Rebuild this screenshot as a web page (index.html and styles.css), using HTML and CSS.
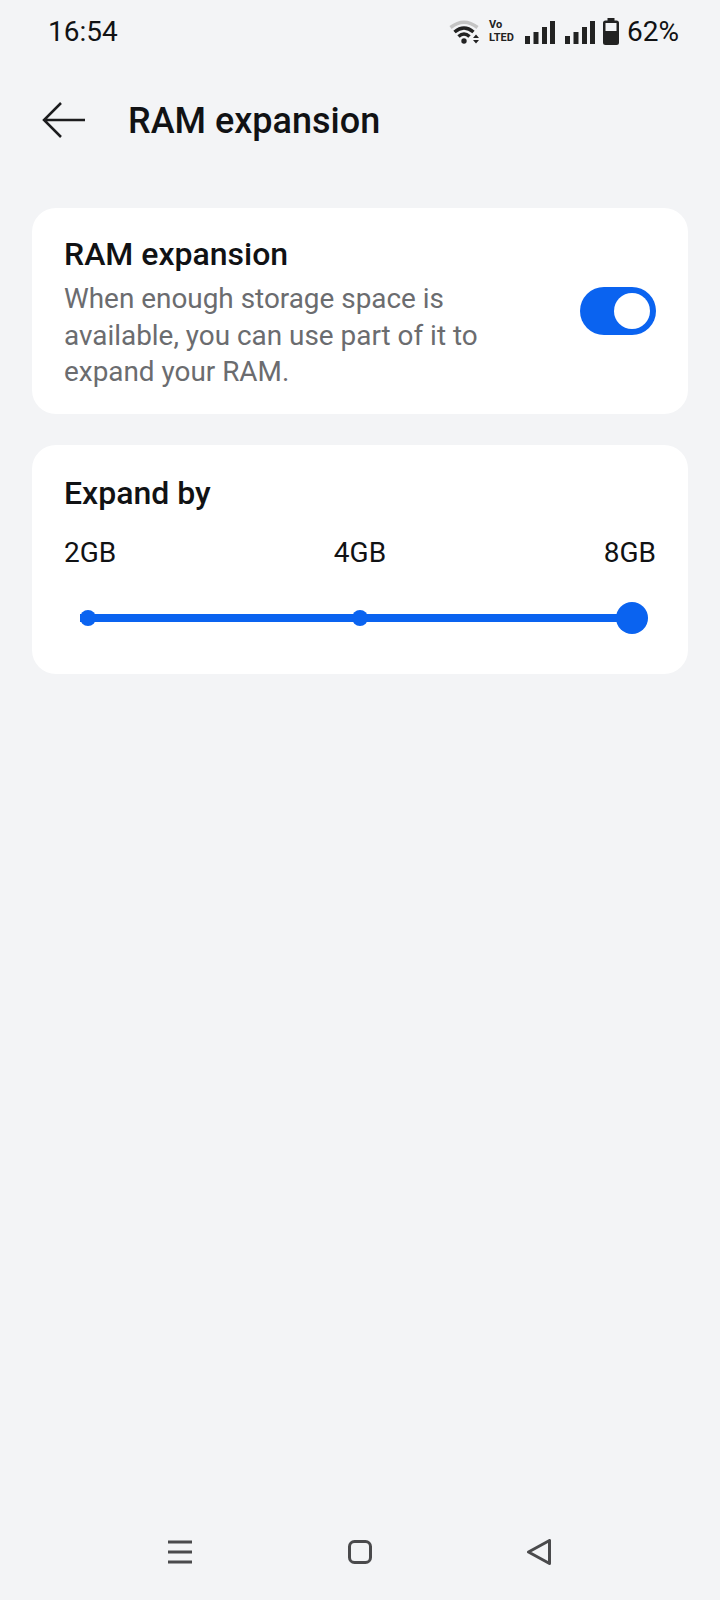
FILE: index.html
```html
<!DOCTYPE html>
<html lang="en">
<head>
    <meta charset="UTF-8">
    <meta name="viewport" content="width=device-width, initial-scale=1.0">
    <title>RAM expansion</title>
    <link rel="stylesheet" href="styles.css">
</head>
<body>
    <div class="app">
        <div class="status-bar">
            <span class="time">16:54</span>
            <div class="status-icons">
                <svg class="icon-wifi" width="32" height="24" viewBox="0 0 32 24">
                    <path d="M1.500 7.500 Q15 -3 28.500 7.500" fill="none" stroke="#c4c4c4" stroke-width="3.500"/>
                    <path d="M5.500 12 Q15 4 24.500 12" fill="none" stroke="#222" stroke-width="3.500"/>
                    <path d="M9.500 16.500 Q15 11.500 20.500 16.500" fill="none" stroke="#222" stroke-width="3.500"/>
                    <circle cx="15" cy="21" r="2.700" fill="#222"/>
                    <path d="M24 18 L27 14.500 L30 18 Z M24 20 H30 L27 23.500 Z" fill="#222"/>
                </svg>
                <div class="volte"><span>Vo</span><span>LTED</span></div>
                <svg class="icon-signal" width="30" height="24" viewBox="0 0 30 24">
                    <rect x="0" y="16" width="5" height="8"/>
                    <rect x="8.500" y="12" width="5" height="12"/>
                    <rect x="17" y="7" width="5" height="17"/>
                    <rect x="25" y="1" width="5" height="23"/>
                </svg>
                <svg class="icon-signal" width="30" height="24" viewBox="0 0 30 24">
                    <rect x="0" y="16" width="5" height="8"/>
                    <rect x="8.500" y="12" width="5" height="12"/>
                    <rect x="17" y="7" width="5" height="17"/>
                    <rect x="25" y="1" width="5" height="23"/>
                </svg>
                <svg class="icon-battery" width="16" height="27" viewBox="0 0 16 27">
                    <path d="M4.500 0 H11.500 V2.500 H13.500 Q16 2.500 16 5 V24.500 Q16 27 13.500 27 H2.500 Q0 27 0 24.500 V5 Q0 2.500 2.500 2.500 H4.500 Z" fill="#222"/>
                    <rect x="2.500" y="5" width="11" height="8" fill="#f3f4f6"/>
                </svg>
                <span class="battery-text">62%</span>
            </div>
        </div>

        <div class="header">
            <svg class="back-arrow" width="44" height="36" viewBox="0 0 44 36">
                <path d="M43 18 H2 M19 1 L2 18 L19 35" fill="none" stroke="#1c1c1e" stroke-width="2.500"/>
            </svg>
            <h1>RAM expansion</h1>
        </div>

        <div class="card card-switch">
            <div class="card-text">
                <h2>RAM expansion</h2>
                <p>When enough storage space is available, you can use part of it to expand your RAM.</p>
            </div>
            <div class="toggle"><div class="toggle-thumb"></div></div>
        </div>

        <div class="card card-slider">
            <h2>Expand by</h2>
            <div class="slider-labels">
                <span>2GB</span>
                <span>4GB</span>
                <span>8GB</span>
            </div>
            <div class="slider">
                <span class="stop"></span>
                <span class="stop"></span>
                <span class="thumb"></span>
            </div>
        </div>

        <div class="nav-bar">
            <svg width="24" height="24" viewBox="0 0 24 24">
                <path d="M0 2 H24 M0 12 H24 M0 22 H24" stroke="#4a4a4c" stroke-width="3"/>
            </svg>
            <svg width="24" height="24" viewBox="0 0 24 24">
                <rect x="1.500" y="1.500" width="21" height="21" rx="5" fill="none" stroke="#4a4a4c" stroke-width="3"/>
            </svg>
            <svg width="24" height="26" viewBox="0 0 24 26">
                <path d="M1.500 13 L22.500 1.500 V24.500 Z" fill="none" stroke="#4a4a4c" stroke-width="3" stroke-linejoin="round"/>
            </svg>
        </div>
    </div>
</body>
</html>
```

FILE: styles.css
```css
:root {
    --primary-color: #0a63f0;
    --text-color: #111214;
    --muted-color: #6b6c6f;
    --background-color: #f3f4f6;
    --card-bg: #ffffff;
}

* {
    box-sizing: border-box;
    margin: 0;
    padding: 0;
}

body {
    font-family: Roboto, 'Noto Sans', sans-serif;
    background-color: var(--background-color);
    color: var(--text-color);
}

.app {
    width: 720px;
    height: 1600px;
    display: flex;
    flex-direction: column;
    padding: 0 32px;
}

.status-bar {
    height: 62px;
    display: flex;
    justify-content: space-between;
    align-items: center;
    margin: 0 9px 0 16px;
    font-size: 28px;
}

.status-icons {
    display: flex;
    align-items: center;
    gap: 8px;
}

.icon-wifi {
    margin-top: 2px;
}

.icon-signal {
    fill: #222;
    margin-top: 2px;
}

.icon-signal + .icon-signal {
    margin-left: 2px;
}

.volte {
    display: flex;
    flex-direction: column;
    font-size: 11px;
    font-weight: 700;
    line-height: 13px;
    color: #222;
    width: 25px;
    margin-right: 3px;
}

.header {
    height: 88px;
    margin-top: 15px;
    display: flex;
    align-items: center;
    gap: 42px;
    padding-left: 10px;
}

.back-arrow {
    margin-bottom: 2px;
}

.header h1 {
    font-size: 36px;
    font-weight: 500;
}

.card {
    background-color: var(--card-bg);
    border-radius: 24px;
}

.card h2 {
    font-size: 32px;
    font-weight: 500;
    line-height: 36px;
}

.card-switch {
    margin-top: 43px;
    height: 206px;
    display: flex;
    justify-content: space-between;
    align-items: center;
    padding: 0 32px;
}

.card-text {
    width: 430px;
}

.card-text p {
    font-size: 27.900px;
    line-height: 36.500px;
    color: var(--muted-color);
    margin-top: 9px;
    margin-bottom: -5px;
}

.toggle {
    width: 76px;
    height: 48px;
    border-radius: 24px;
    background-color: var(--primary-color);
    display: flex;
    justify-content: flex-end;
    align-items: center;
    padding-right: 6px;
}

.toggle-thumb {
    width: 36px;
    height: 36px;
    border-radius: 50%;
    background-color: var(--card-bg);
}

.card-slider {
    margin-top: 31px;
    height: 229px;
    padding: 30px 32px 0;
}

.slider-labels {
    display: flex;
    justify-content: space-between;
    font-size: 28px;
    line-height: 34px;
    margin-top: 25px;
}

.slider {
    height: 8px;
    margin: 44px 16px 0;
    background-color: var(--primary-color);
    display: flex;
    justify-content: space-between;
    align-items: center;
}

.stop {
    width: 16px;
    height: 16px;
    border-radius: 50%;
    background-color: var(--primary-color);
}

.thumb {
    width: 32px;
    height: 32px;
    margin: 0 -8px;
    border-radius: 50%;
    background-color: var(--primary-color);
}

.nav-bar {
    margin-top: auto;
    height: 74px;
    padding: 0 137px 22px 136px;
    display: flex;
    justify-content: space-between;
    align-items: center;
}

.nav-bar svg {
    flex: none;
}
```
